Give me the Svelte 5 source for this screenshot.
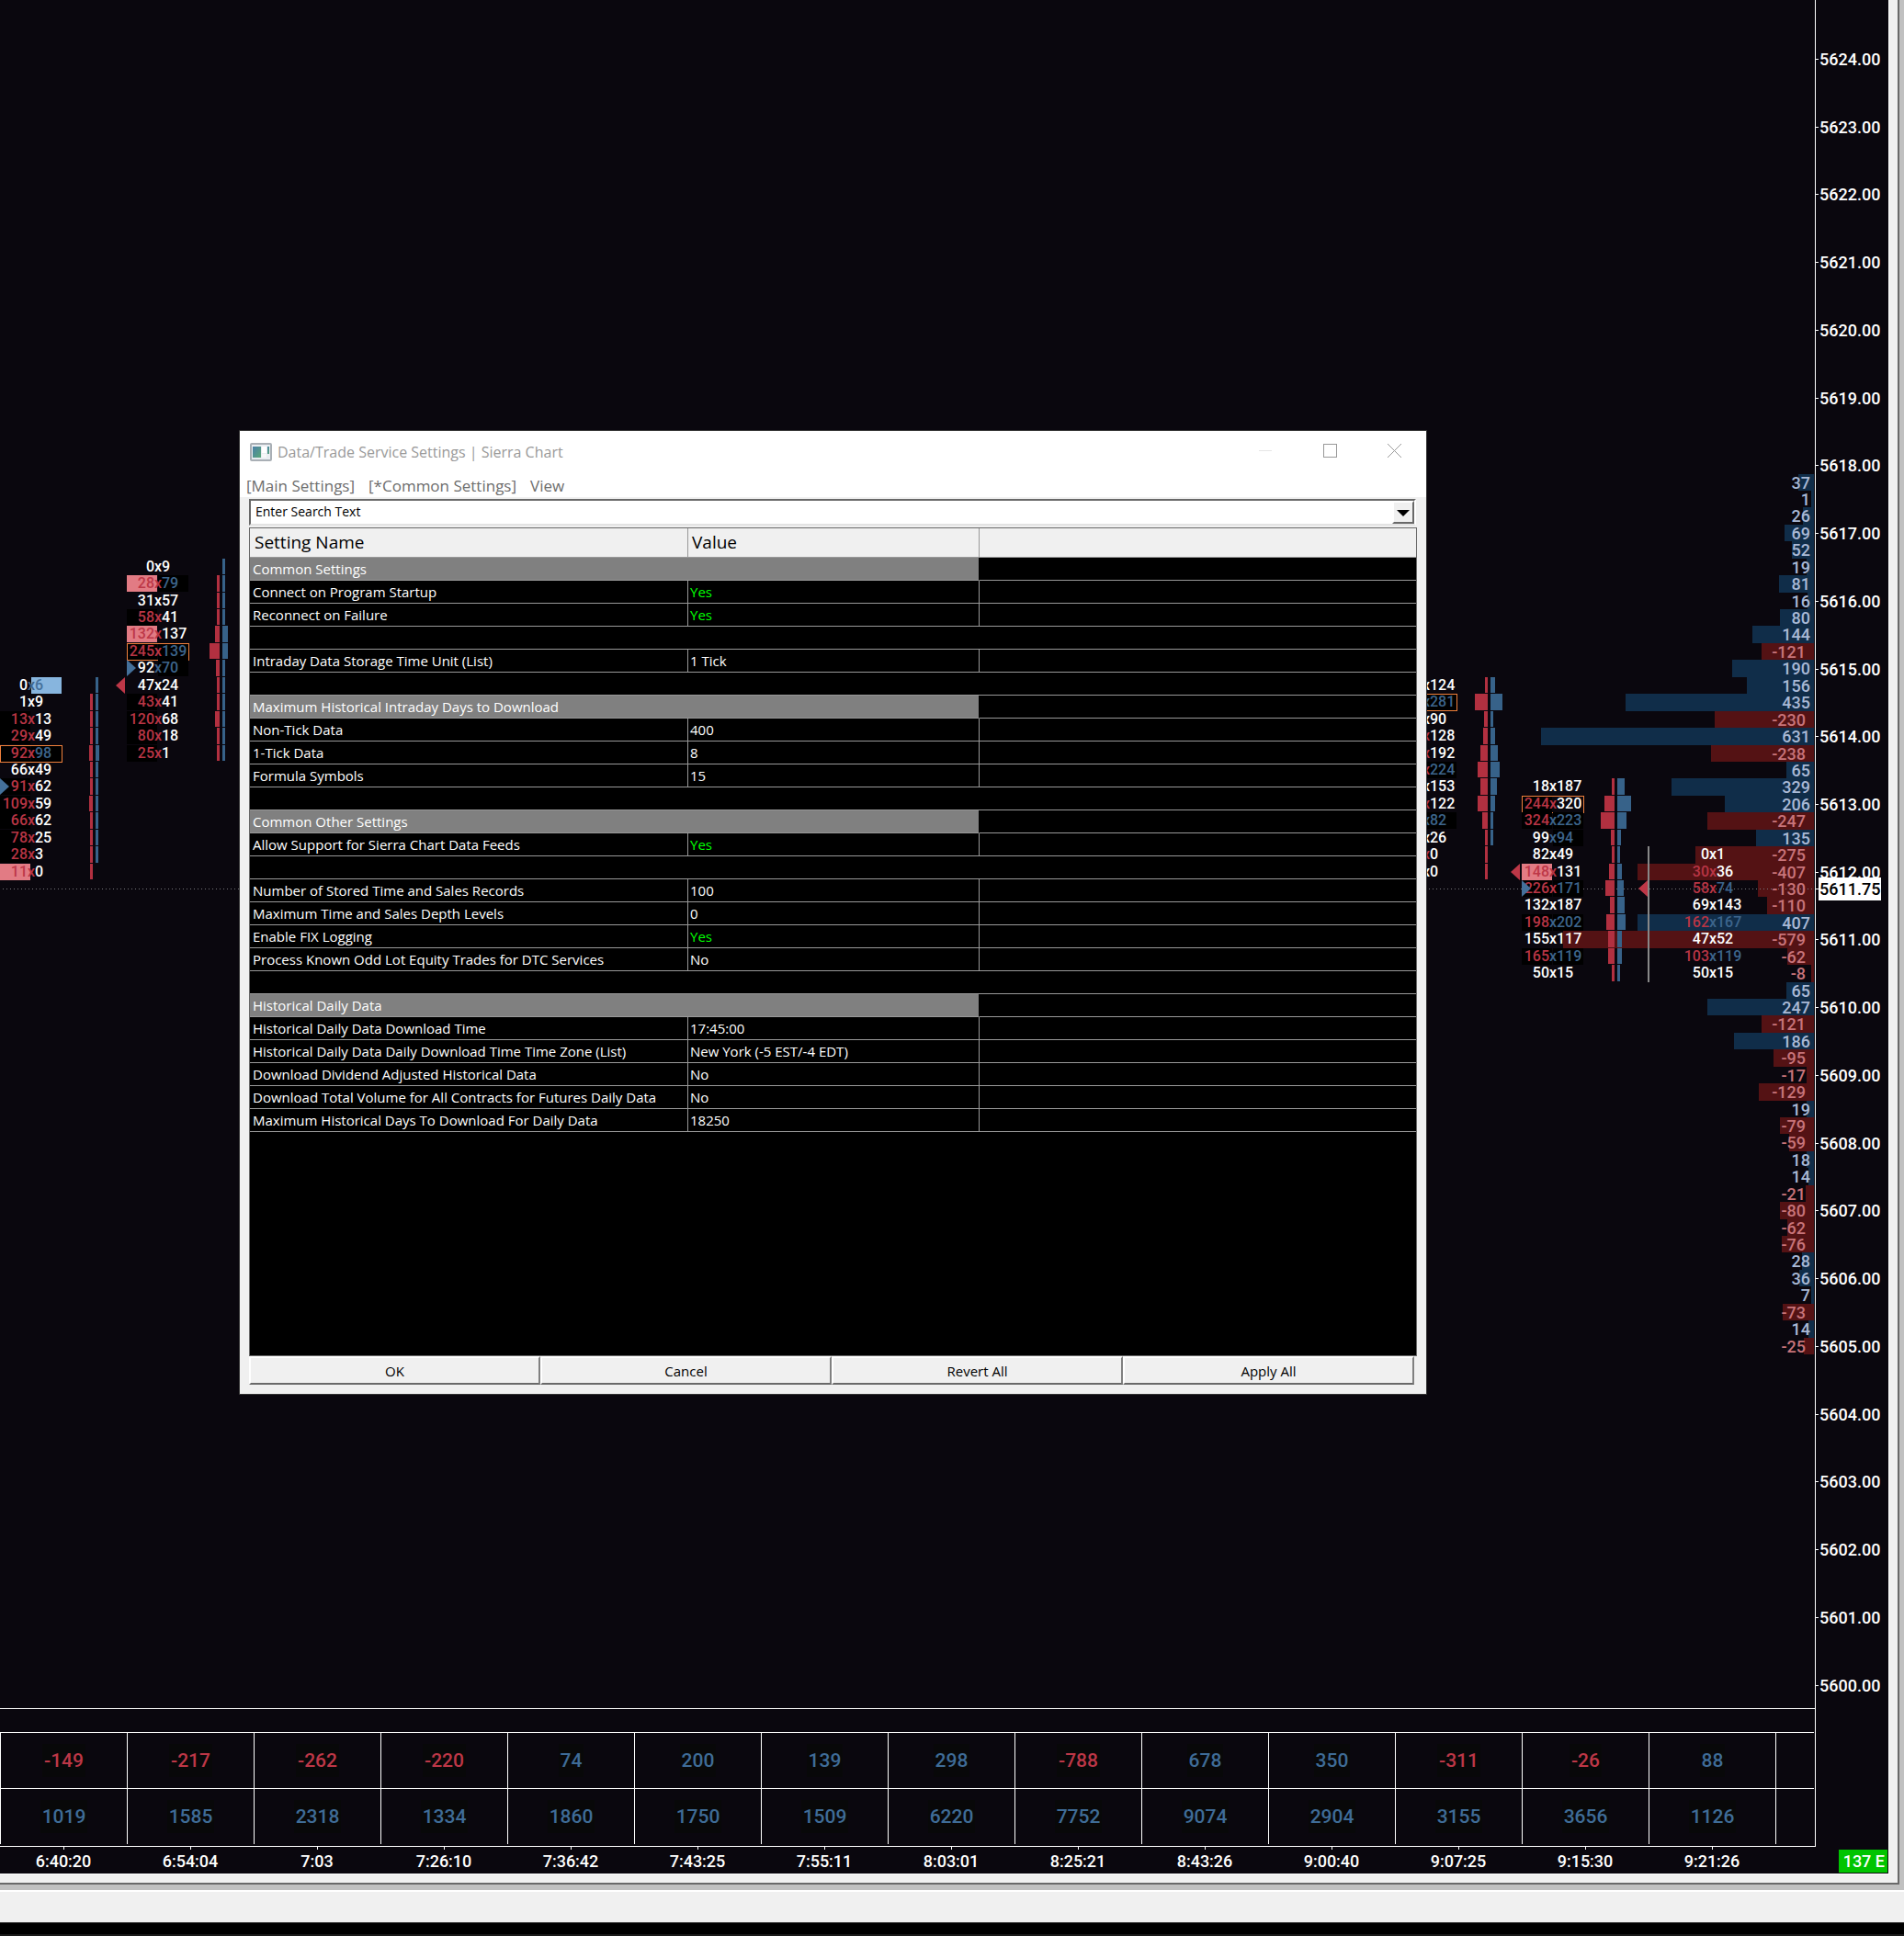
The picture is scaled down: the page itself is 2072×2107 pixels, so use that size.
<script>
  const TOP_PRICE = 5624;
  const TOP_Y = 64;
  const POINT = 73.73; // pixels per 1.00 of price
  const TICK = 0.25;
  const BAR_SPACING = 138;
  const lastPrice = 5611.75;

  const prices = Array.from({ length: 25 }, (_, i) => TOP_PRICE - i);

  // bid, ask, bid volume width, ask volume width, flags
  // r = bid dominant, b = ask dominant, x/y = red/blue separator,
  // R/B = highlighted cell, o = point of control, < > = open/close markers
  const footprints = [
    {
      slot: 0, high: 5614.75,
      rows: [
        ['0', '6', 0, 3, 'By'],
        ['1', '9', 3, 3, ''],
        ['13', '13', 3, 3, 'rx'],
        ['29', '49', 3, 3, 'rx'],
        ['92', '98', 4, 4, 'rbxo'],
        ['66', '49', 3, 3, ''],
        ['91', '62', 3, 3, 'rx>'],
        ['109', '59', 4, 3, 'rx'],
        ['66', '62', 3, 3, 'rx'],
        ['78', '25', 3, 3, 'rx'],
        ['28', '3', 3, 3, 'rx'],
        ['11', '0', 3, 0, 'Rx']
      ]
    },
    {
      slot: 1, high: 5616.5,
      rows: [
        ['0', '9', 0, 3, ''],
        ['28', '79', 3, 3, 'Rbx'],
        ['31', '57', 3, 3, ''],
        ['58', '41', 3, 3, 'rx'],
        ['132', '137', 5, 6, 'Rx'],
        ['245', '139', 11, 6, 'rbxo'],
        ['92', '70', 4, 3, 'by>'],
        ['47', '24', 3, 3, '<'],
        ['43', '41', 3, 3, 'rx'],
        ['120', '68', 5, 3, 'rx'],
        ['80', '18', 3, 3, 'rx'],
        ['25', '1', 3, 3, 'rx']
      ]
    },
    {
      slot: 11, high: 5614.75,
      rows: [
        ['', '124', 3, 5, ''],
        ['', '281', 14, 13, 'byo'],
        ['', '90', 4, 3, ''],
        ['', '128', 5, 5, 'x'],
        ['', '192', 8, 8, 'x'],
        ['', '224', 11, 10, 'bx'],
        ['', '153', 8, 7, ''],
        ['', '122', 11, 5, 'x'],
        ['', '82', 6, 3, 'by'],
        ['', '26', 3, 3, ''],
        ['', '0', 3, 0, 'x'],
        ['', '0', 3, 0, '']
      ]
    },
    {
      slot: 12, high: 5613.25,
      rows: [
        ['18', '187', 3, 8, ''],
        ['244', '320', 11, 15, 'rxo'],
        ['324', '223', 15, 10, 'rby'],
        ['99', '94', 4, 4, 'by'],
        ['82', '49', 3, 3, ''],
        ['148', '131', 6, 5, 'Rx<'],
        ['226', '171', 10, 7, 'rbx>'],
        ['132', '187', 5, 8, ''],
        ['198', '202', 9, 9, 'rby'],
        ['155', '117', 7, 5, ''],
        ['165', '119', 7, 5, 'rby'],
        ['50', '15', 3, 3, '']
      ]
    },
    {
      slot: 13, high: 5612.25, live: true,
      rows: [
        ['0', '1', 0, 0, ''],
        ['30', '36', 0, 0, 'rx'],
        ['58', '74', 0, 0, 'rbx<'],
        ['69', '143', 0, 0, ''],
        ['162', '167', 0, 0, 'rby'],
        ['47', '52', 0, 0, ''],
        ['103', '119', 0, 0, 'rby'],
        ['50', '15', 0, 0, '']
      ]
    }
  ];

  const profileHigh = 5617.75;
  const profile = [
    37, 1, 26, 69, 52, 19, 81, 16, 80, 144, -121, 190, 156, 435, -230, 631, -238, 65,
    329, 206, -247, 135, -275, -407, -130, -110, 407, -579, -62, -8, 65, 247, -121, 186,
    -95, -17, -129, 19, -79, -59, 18, 14, -21, -80, -62, -76, 28, 36, 7, -73, 14, -25
  ];

  const deltas = [-149, -217, -262, -220, 74, 200, 139, 298, -788, 678, 350, -311, -26, 88];
  const volumes = [1019, 1585, 2318, 1334, 1860, 1750, 1509, 6220, 7752, 9074, 2904, 3155, 3656, 1126];
  const times = [
    '6:40:20', '6:54:04', '7:03', '7:26:10', '7:36:42', '7:43:25', '7:55:11',
    '8:03:01', '8:25:21', '8:43:26', '9:00:40', '9:07:25', '9:15:30', '9:21:26'
  ];

  const settings = [
    { group: 'Common Settings' },
    { name: 'Connect on Program Startup', value: 'Yes' },
    { name: 'Reconnect on Failure', value: 'Yes' },
    {},
    { name: 'Intraday Data Storage Time Unit (List)', value: '1 Tick' },
    {},
    { group: 'Maximum Historical Intraday Days to Download' },
    { name: 'Non-Tick Data', value: '400' },
    { name: '1-Tick Data', value: '8' },
    { name: 'Formula Symbols', value: '15' },
    {},
    { group: 'Common Other Settings' },
    { name: 'Allow Support for Sierra Chart Data Feeds', value: 'Yes' },
    {},
    { name: 'Number of Stored Time and Sales Records', value: '100' },
    { name: 'Maximum Time and Sales Depth Levels', value: '0' },
    { name: 'Enable FIX Logging', value: 'Yes' },
    { name: 'Process Known Odd Lot Equity Trades for DTC Services', value: 'No' },
    {},
    { group: 'Historical Daily Data' },
    { name: 'Historical Daily Data Download Time', value: '17:45:00' },
    { name: 'Historical Daily Data Daily Download Time Time Zone (List)', value: 'New York (-5 EST/-4 EDT)' },
    { name: 'Download Dividend Adjusted Historical Data', value: 'No' },
    { name: 'Download Total Volume for All Contracts for Futures Daily Data', value: 'No' },
    { name: 'Maximum Historical Days To Download For Daily Data', value: '18250' }
  ];

  let search = $state('Enter Search Text');
  let open = $state(true);

  /** @param {number} price */
  function priceY(price) {
    return Math.round(TOP_Y + (TOP_PRICE - price) * POINT);
  }

  /** top edge of the one-tick band around a price
   * @param {number} price */
  function bandTop(price) {
    return priceY(price + TICK / 2);
  }

  /** @param {number} price */
  function bandHeight(price) {
    return bandTop(price - TICK) - bandTop(price);
  }

  /** @param {number} v */
  function barWidth(v) {
    return Math.max(3, Math.floor(Math.abs(v) * 0.472));
  }
</script>

<main class="desktop">
  <div class="workspace">
    <div class="chart-window">
      <div class="chart">
        <div class="panes">
          <div class="plot">
            {#each profile as v, i}
              {@const p = profileHigh - i * TICK}
              <div
                class="profile-bar"
                class:neg={v < 0}
                style="top:{bandTop(p)}px; height:{bandHeight(p)}px; width:{barWidth(v)}px"
              ></div>
            {/each}
            <div class="last-line" style="top:{priceY(lastPrice)}px"></div>
            {#each profile as v, i}
              <span class="profile-label" class:neg={v < 0} style="top:{bandTop(profileHigh - i * TICK)}px">{v}</span>
            {/each}
            {#each footprints as fp}
              <div class="footprint" class:live={fp.live} style="left:{fp.slot * BAR_SPACING}px; top:{bandTop(fp.high)}px">
                {#each fp.rows as [bid, ask, bw, aw, f], i}
                  <div class="fp-row" style="height:{bandHeight(fp.high - i * TICK)}px">
                    {#if f.includes('>')}
                      <svg class="mark open" width="10" height="18" viewBox="0 0 10 18"><path d="M0 0 10 9 0 18z" fill="#44709a" /></svg>
                    {/if}
                    {#if f.includes('<')}
                      <svg class="mark close" width="10" height="18" viewBox="0 0 10 18"><path d="M10 0 0 9 10 18z" fill="#bd3747" /></svg>
                    {/if}
                    <div class="cells" class:poc={f.includes('o')}>
                      <span class="bid" class:red={f.includes('r')} class:hot={f.includes('R')}>{bid}</span>
                      <span class="sep" class:red={f.includes('x')} class:blue={f.includes('y')}>x</span>
                      <span class="ask" class:blue={f.includes('b')} class:hot={f.includes('B')}>{ask}</span>
                    </div>
                    {#if !fp.live}
                      <div class="vol"><i class="vol-bid" style="width:{bw}px"></i></div>
                      <i class="vol-ask" style="width:{aw}px"></i>
                    {/if}
                  </div>
                {/each}
              </div>
            {/each}
          </div>
          <div class="band"></div>
          <div class="stats">
            <table>
              <tbody>
                <tr>
                  {#each deltas as d}
                    <td class="slot" class:neg={d < 0}><span>{d}</span></td>
                  {/each}
                  <td></td>
                </tr>
                <tr>
                  {#each volumes as v}
                    <td class="slot"><span>{v}</span></td>
                  {/each}
                  <td></td>
                </tr>
              </tbody>
            </table>
          </div>
        </div>
        <div class="price-axis">
          {#each prices as p}
            <span class="price" style="top:{priceY(p)}px">{p.toFixed(2)}</span>
          {/each}
          <span class="price current" style="top:{priceY(lastPrice)}px">{lastPrice}</span>
        </div>
        <div class="time-axis">
          {#each times as t}
            <span>{t}</span>
          {/each}
        </div>
        <div class="corner"><span class="badge">137 E</span></div>
      </div>
    </div>

    {#if open}
      <section class="dialog" aria-label="Data/Trade Service Settings">
        <header>
          <svg class="app-icon" width="24" height="20" viewBox="0 0 24 20">
            <defs>
              <linearGradient id="tile" x1="0" y1="0" x2="1" y2="1">
                <stop offset="0" stop-color="#4a7fa8" />
                <stop offset="1" stop-color="#5aa878" />
              </linearGradient>
            </defs>
            <rect x="1" y="1" width="22" height="18" rx="1" fill="#e9edf1" stroke="#a9afb5" stroke-width="2" />
            <rect x="3" y="4" width="9" height="12" fill="url(#tile)" />
            <rect x="13" y="4" width="5" height="7" fill="#fff" />
            <rect x="13" y="12" width="5" height="4" fill="#f6f7f8" />
            <rect x="19" y="4" width="2" height="8" fill="url(#tile)" />
          </svg>
          <h1>Data/Trade Service Settings | Sierra Chart</h1>
          <div class="window-buttons">
            <button aria-label="Minimize" disabled><svg width="15" height="15"><path d="M0 7.5h14" stroke="#e6e6e6" fill="none" /></svg></button>
            <button aria-label="Maximize"><svg width="15" height="15"><rect x=".5" y=".5" width="14" height="14" stroke="#999" fill="none" /></svg></button>
            <button aria-label="Close" onclick={() => (open = false)}><svg width="15" height="15"><path d="M0 0 15 15M15 0 0 15" stroke="#999" fill="none" /></svg></button>
          </div>
        </header>
        <nav>
          <button>[Main Settings]</button>
          <button>[*Common Settings]</button>
          <button>View</button>
        </nav>
        <div class="body">
          <div class="search">
            <input type="text" aria-label="Search settings" bind:value={search} />
            <button aria-label="Show search history"><svg width="14" height="8"><path d="M0 0h14L7 7z" fill="#000" /></svg></button>
          </div>
          <div class="list">
            <table>
              <thead>
                <tr><th class="name">Setting Name</th><th class="value">Value</th><th></th></tr>
              </thead>
              <tbody>
                {#each settings as s}
                  {#if s.group}
                    <tr class="group"><th colspan="2" scope="rowgroup">{s.group}</th><td></td></tr>
                  {:else if s.name}
                    <tr><td>{s.name}</td><td class:yes={s.value === 'Yes'}>{s.value}</td><td></td></tr>
                  {:else}
                    <tr class="gap"><td colspan="3"></td></tr>
                  {/if}
                {/each}
              </tbody>
            </table>
          </div>
          <div class="actions">
            <button onclick={() => (open = false)}>OK</button>
            <button onclick={() => (open = false)}>Cancel</button>
            <button>Revert All</button>
            <button>Apply All</button>
          </div>
        </div>
      </section>
    {/if}
  </div>
  <footer class="status"></footer>
  <div class="taskbar"></div>
</main>

<style>
  :global(body) { background: #1a1a1a; }
  * { box-sizing: border-box; }
  button { font: inherit; color: inherit; padding: 0; border: none; background: none; }
  .desktop {
    display: flex;
    flex-direction: column;
    min-height: 100vh;
    font-family: 'Open Sans', 'Noto Sans', sans-serif;
  }
  .workspace {
    position: relative;
    flex: 1;
    display: flex;
    background: #c0c0c0;
    padding: 0 5px 6px 0;
  }
  .chart-window {
    flex: 1;
    display: flex;
    background: #f0f0f0;
    border: solid #696969;
    border-width: 0 2px 2px 0;
    padding: 0 9px 9px 0;
  }
  .chart {
    flex: 1;
    min-width: 0;
    display: grid;
    grid-template-columns: 1fr 79px;
    grid-template-rows: 1fr 30px;
    background: #0a070e;
    border: solid #fff;
    border-width: 0 1px 1px 0;
    color: #fff;
    font-family: Roboto, 'Liberation Sans', sans-serif;
    font-size: 18px;
    font-weight: 500;
  }
  .panes {
    display: flex;
    flex-direction: column;
    min-width: 0;
    border-right: 1px solid #fff;
  }

  /* plot */
  .plot {
    position: relative;
    flex: 1;
    overflow: hidden;
  }
  .profile-bar {
    position: absolute;
    right: 1px;
    background: #102d49;
  }
  .profile-bar.neg { background: #541214; }
  .profile-label {
    position: absolute;
    right: 5px;
    line-height: 20px;
    color: #a9b9d6;
  }
  .profile-label.neg {
    right: 10px;
    color: #c8747a;
  }
  .last-line {
    position: absolute;
    left: 3px;
    right: 1px;
    height: 1px;
    background: repeating-linear-gradient(to right, #77757a 0 1px, transparent 1px 4px);
  }
  .footprint {
    position: absolute;
    width: 138px;
    font-size: 16px;
  }
  .footprint.live {
    margin-left: -1px;
    border-left: 2px solid #888;
  }
  .fp-row {
    position: relative;
    display: flex;
    padding-bottom: 1px;
    line-height: 18px;
  }
  .cells {
    display: grid;
    grid-template-columns: 30px 8px 30px;
    width: 68px;
    height: 100%;
  }
  .live .cells { margin-left: 35px; }
  .poc {
    outline: 1px solid #f0803c;
    outline-offset: -1px;
    height: 19px;
  }
  .bid { text-align: right; }
  .sep { text-align: center; z-index: 1; }
  .red { color: #b93545; }
  .blue { color: #3d658c; }
  .bid.red, .bid.hot { margin-right: -3px; padding-right: 3px; background: #000; }
  .ask.blue, .ask.hot { margin: 0 1px 0 -4px; padding-left: 4px; background: #000; }
  .live .bid.red, .live .ask.blue { background: none; }
  .bid.hot { background: #e27b84; color: #bd3747; }
  .ask.hot { background: #87b5de; color: #44709a; }
  .mark {
    position: absolute;
    top: 0;
    z-index: 1;
  }
  .mark.open { left: 0; }
  .mark.close { left: -12px; }
  .vol {
    width: 33px;
    display: flex;
    justify-content: flex-end;
    margin-right: 3px;
  }
  .vol-bid { background: #b23040; }
  .vol-ask { background: #376289; }

  /* bar statistics */
  .band {
    height: 26px;
    border-top: 1px solid #fff;
  }
  .stats { padding: 0 1px 2px 0; }
  .stats table {
    width: 100%;
    table-layout: fixed;
    border-spacing: 0;
  }
  .stats td {
    height: 61px;
    padding: 0;
    border: solid #fff;
    border-width: 1px 0 0 1px;
    text-align: center;
    font-size: 21px;
    color: #3f6c97;
  }
  .stats td.slot { width: 138px; }
  .stats td.neg { color: #bd3747; }
  .stats span {
    padding: 6px 2px;
    background: #080809;
  }

  /* axes */
  .price-axis { position: relative; }
  .price {
    position: absolute;
    left: 3px;
    margin-top: -12px;
    padding: 0 1px;
    line-height: 25px;
  }
  .price::before {
    content: '';
    position: absolute;
    left: -3px;
    top: 12px;
    width: 3px;
    height: 1px;
    background: #fff;
  }
  .price.current { background: #fff; color: #000; }
  .time-axis {
    display: flex;
    border: solid #fff;
    border-width: 1px 0 0;
  }
  .time-axis span {
    position: relative;
    width: 138px;
    text-align: center;
    line-height: 31px;
  }
  .time-axis span::before {
    content: '';
    position: absolute;
    left: 50%;
    top: 0;
    width: 1px;
    height: 3px;
    background: #fff;
  }
  .corner {
    display: flex;
    justify-content: flex-end;
    align-items: flex-end;
    padding: 0 1px 1px 0;
  }
  .badge {
    padding: 0 3px 0 5px;
    line-height: 25px;
    background: #00c400;
  }

  /* dialog */
  .dialog {
    position: absolute;
    left: 260px;
    top: 468px;
    width: 1293px;
    display: flex;
    flex-direction: column;
    background: #f0f0f0;
    border: 1px solid #333;
    color: #000;
    z-index: 2;
  }
  .dialog header {
    display: flex;
    align-items: center;
    height: 45px;
    padding-left: 11px;
    background: #fff;
  }
  h1 {
    margin: 0 0 0 6px;
    flex: 1;
    font-size: 16px;
    font-weight: 400;
    color: #999;
  }
  .window-buttons { display: flex; }
  .window-buttons button {
    width: 70px;
    height: 44px;
  }
  nav {
    display: flex;
    gap: 15px;
    height: 27px;
    padding: 0 7px;
    background: #fff;
    font-size: 17px;
    line-height: 30px;
    color: #6d6d6d;
  }
  .body {
    display: flex;
    flex-direction: column;
    padding: 2px 10px 10px;
    font-size: 15px;
  }
  .search {
    display: flex;
    height: 29px;
    margin-right: 1px;
    margin-bottom: 2px;
    background: #fff;
    border: 2px solid;
    border-color: #696969 #fff #e3e3e3 #696969;
    font-size: 14px;
  }
  .search input {
    flex: 1;
    min-width: 0;
    padding: 0 0 2px 5px;
    border: none;
    outline: none;
    background: none;
    font: inherit;
  }
  .search button {
    width: 24px;
    background: #f0f0f0;
    border: 2px solid;
    border-color: #fff #696969 #696969 #fff;
    line-height: 12px;
  }
  .list {
    min-height: 902px;
    background: #000;
    border: 1px solid #696969;
    color: #fff;
  }
  .list table {
    width: 100%;
    table-layout: fixed;
    border-spacing: 0;
  }
  .list th, .list td {
    height: 25px;
    padding: 0 2px;
    border-bottom: 1px solid #999;
    font-weight: 400;
    text-align: left;
    line-height: 24px;
    white-space: nowrap;
  }
  .list tbody tr > :first-child { padding-left: 3px; }
  .list thead th {
    height: 32px;
    padding: 0 5px;
    background: #f0f0f0;
    color: #000;
    font-size: 19px;
    line-height: 31px;
  }
  .list .name { width: 476px; }
  .list .value { width: 317px; }
  .list tr > * + * { border-left: 1px solid #999; }
  .list thead th + th { padding-left: 4px; }
  .list .group th { background: #808080; }
  .list .group td { border-left-color: #000; }
  .list .yes { color: #0f0; }
  .actions {
    display: flex;
    margin-right: 3px;
  }
  .actions button {
    flex: 1;
    height: 31px;
    border: 2px solid;
    border-color: #fff #808080 #696969 #fff;
  }

  .status {
    height: 36px;
    background: #f0f0f0;
    border-top: 2px solid #fff;
    border-bottom: 1px solid #333;
  }
  .taskbar {
    height: 14px;
    background: #000;
    border-bottom: 2px solid #1a1a1a;
  }
</style>
